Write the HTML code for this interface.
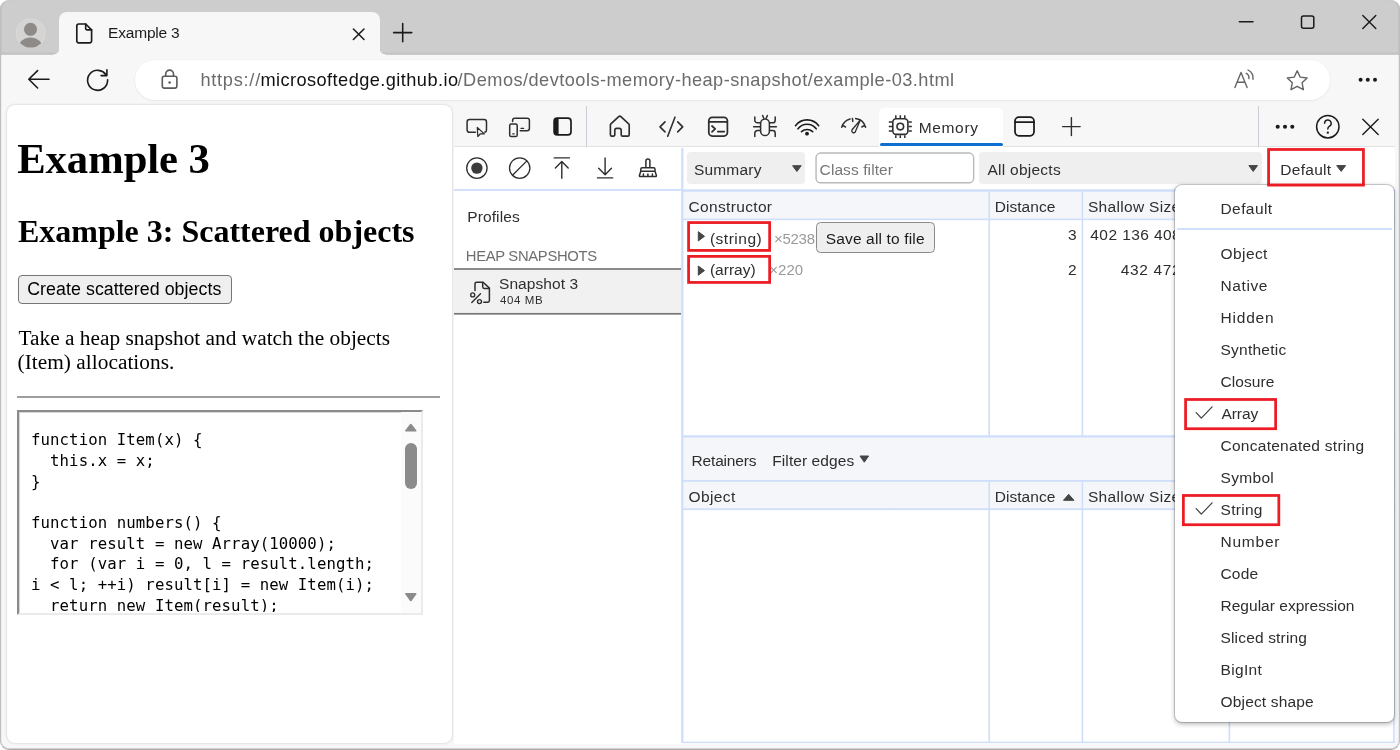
<!DOCTYPE html>
<html lang="en">
<head>
<meta charset="utf-8">
<title>Example 3</title>
<style>
*{box-sizing:border-box;margin:0;padding:0}
html,body{width:1400px;height:750px;overflow:hidden;background:#fff}
body{font-family:"Liberation Sans",sans-serif;color:#1b1b1b;position:relative}
.g{position:absolute;left:0;top:0;width:0;height:0;will-change:transform}
.b{position:absolute}
.t{position:absolute;white-space:pre;line-height:normal}
svg.ov{position:absolute;left:0;top:0;width:1400px;height:750px;overflow:visible;pointer-events:none}
.k{fill:none;stroke:#1b1b1b;stroke-width:1.5;stroke-linecap:round;stroke-linejoin:round}
.d{fill:none;stroke:#2e2e2e;stroke-width:1.4;stroke-linecap:round;stroke-linejoin:round}
.gy{fill:none;stroke:#646464;stroke-width:1.4;stroke-linecap:round;stroke-linejoin:round}
#win{position:absolute;left:0;top:0;width:1400px;height:750px;border-radius:9px;background:#f7f7f7;overflow:hidden}
#frame{position:absolute;left:0;top:0;width:1400px;height:750px;border-radius:9px;border:1px solid;border-color:#cbcbcb #bfbfbf #ababab #bfbfbf;box-shadow:inset 0 -1px 0 rgba(0,0,0,.15),inset -1px 0 0 rgba(0,0,0,.05),inset 1px 0 0 rgba(0,0,0,.04);pointer-events:none}
#titlebar{left:0;top:0;width:1400px;height:55px;background:linear-gradient(#cdcdcd 0,#cdcdcd 52px,#c3c3c3 53.2px,#c4c4c4 54.3px,#dcdcdc 55px)}
#tab{left:59px;top:12px;width:320.5px;height:43px;background:#f7f7f7;border-radius:8px 8px 0 0}
.tc{width:6.5px;height:6.5px;top:48px}
#addr{left:135px;top:60px;width:1195px;height:40px;border-radius:20px;background:#fff;box-shadow:0 0.5px 2px rgba(0,0,0,.10)}
#page{left:6.6px;top:105.4px;width:445.4px;height:637.6px;background:#fff;border-radius:8px;box-shadow:0 0 2.5px rgba(0,0,0,.22)}
#dt{left:454px;top:147px;width:940.5px;height:596.7px;background:#fff}
.ln{background:#d2e1fb}
.hdr{background:#f5f6f9}
.red{border:3px solid #e81224}
.sel{background:#efefef;border-radius:4px}
</style>
</head>
<body>
<div id="win">

<!-- ===== browser chrome ===== -->
<div class="g" id="chrome">
<div class="b" id="titlebar"></div>
<div class="b" id="tab"></div>
<div class="b tc" style="left:52.5px;background:radial-gradient(circle at 0 0,rgba(247,247,247,0) 6.1px,#f7f7f7 6.9px)"></div>
<div class="b tc" style="left:379.5px;background:radial-gradient(circle at 100% 0,rgba(247,247,247,0) 6.1px,#f7f7f7 6.9px)"></div>
<div class="b" id="addr"></div>
<span class="t" style="left:108.1px;top:24.4px;font-size:15.5px;color:#1b1b1b;letter-spacing:-0.200px;">Example 3</span>
<span class="t" style="left:200.4px;top:69.9px;font-size:18.2px;color:#6b6b6b;letter-spacing:0.743px;">https://</span>
<span class="t" style="left:260.4px;top:69.9px;font-size:18.2px;color:#111;letter-spacing:0.436px;">microsoftedge.github.io</span>
<span class="t" style="left:457.6px;top:69.9px;font-size:18.2px;color:#6b6b6b;letter-spacing:0.459px;">/Demos/devtools-memory-heap-snapshot/example-03.html</span>
<svg class="ov" viewBox="0 0 1400 750">
<!-- profile avatar -->
<clipPath id="av"><circle cx="30.7" cy="33.3" r="14.3"/></clipPath>
<circle cx="30.7" cy="33.3" r="14.9" fill="#dcdad8"/>
<circle cx="30.7" cy="33.3" r="14.1" fill="#d5d4d2"/>
<g clip-path="url(#av)" fill="#8e8a87"><circle cx="30.5" cy="29.3" r="6.5"/><ellipse cx="30.5" cy="48" rx="12" ry="10.5"/></g>
<!-- tab page icon -->
<path class="k" style="stroke-width:1.65" d="M78.8 24h6.9l5.9 5.9v10.9a2 2 0 0 1-2 2h-10.8a2 2 0 0 1-2-2v-14.8a2 2 0 0 1 2-2z"/>
<path class="k" style="stroke-width:1.65" d="M85.7 24v4.4a1.5 1.5 0 0 0 1.5 1.5h4.4"/>
<!-- tab close, new tab -->
<path class="k" style="stroke-width:1.55" d="M353.4 29l10.6 10.5M364 29l-10.6 10.5"/>
<path class="k" style="stroke-width:1.55" d="M393.6 32.6h18.2M402.7 23.5v18.2"/>
<!-- window controls -->
<path class="k" style="stroke-width:1.5" d="M1239.4 21.8h13.6"/>
<rect class="k" style="stroke-width:1.5" x="1301.5" y="15.9" width="12.3" height="12.3" rx="2"/>
<path class="k" style="stroke-width:1.45" d="M1362.8 15.5l13 13M1375.8 15.5l-13 13"/>
<!-- back, refresh -->
<path class="k" style="stroke-width:1.6" d="M49 79.3H29M37.6 70.6l-8.8 8.7 8.8 8.7"/>
<path class="k" style="stroke-width:1.6" d="M106.2 75.2A10 10 0 1 0 107.6 79.8M106.9 69.8v5.8h-5.8"/>
<!-- lock -->
<rect class="gy" style="stroke:#5a5a5a;stroke-width:1.6" x="162.3" y="76.3" width="14.6" height="11.8" rx="2"/>
<path class="gy" style="stroke:#5a5a5a;stroke-width:1.6" d="M165.7 76.3v-2.3a3.9 3.9 0 0 1 7.8 0v2.3"/>
<circle cx="169.6" cy="82.5" r="1.25" fill="#5a5a5a"/>
<!-- read aloud -->
<path class="gy" d="M1234.9 87.6l6.1-15.2 6.1 15.2M1237.2 82.3h7.6"/>
<path class="gy" d="M1246.3 73.4a5.2 5.2 0 0 1 2.6 5.2M1248 70a9.3 9.3 0 0 1 5 9.2"/>
<!-- star -->
<path class="gy" d="M1297.2 70.8l3 6.3 6.9 0.9-5 4.8 1.3 6.9-6.2-3.4-6.2 3.4 1.3-6.9-5-4.8 6.9-0.9z"/>
<!-- menu dots -->
<g fill="#1b1b1b"><circle cx="1360.6" cy="79.7" r="2"/><circle cx="1367.8" cy="79.7" r="2"/><circle cx="1375" cy="79.7" r="2"/></g>
</svg>
</div>

<!-- ===== web page ===== -->
<div class="g" id="pagewrap">
<div class="b" id="page"></div>
<div class="b" style="left:17.5px;top:275.4px;width:214.4px;height:28.8px;background:#efefef;border:1.3px solid #767676;border-radius:4px"></div>
<div class="b" style="left:17px;top:396px;width:422.5px;height:2px;background:#9d9d9d"></div>
<!-- textarea -->
<div class="b" style="left:17px;top:410px;width:406px;height:204.5px;background:#fff;border:2px solid;border-color:#8b8b8b #ebebeb #ebebeb #8b8b8b;box-shadow:inset 1px 1px 0 rgba(139,139,139,.35)"></div>
<div class="b" style="left:401px;top:412px;width:20px;height:200.5px;background:#fbfbfb"></div>
<div class="b" style="left:404.6px;top:443.2px;width:12.4px;height:45.4px;border-radius:6.2px;background:#8b8b8b"></div>
<div class="b" style="left:20px;top:412.4px;width:380px;height:199.8px;overflow:hidden"><div class="g" style="left:-20px;top:-412.4px">
<span class="t" style="left:31.0px;top:430.4px;font-size:15.7px;color:#000;font-family:'DejaVu Sans Mono','Liberation Mono',monospace;letter-spacing:0.085px;">function Item(x) {</span>
<span class="t" style="left:31.0px;top:451.1px;font-size:15.7px;color:#000;font-family:'DejaVu Sans Mono','Liberation Mono',monospace;letter-spacing:0.085px;">  this.x = x;</span>
<span class="t" style="left:31.0px;top:471.7px;font-size:15.7px;color:#000;font-family:'DejaVu Sans Mono','Liberation Mono',monospace;letter-spacing:0.077px;">}</span>
<span class="t" style="left:31.0px;top:513.1px;font-size:15.7px;color:#000;font-family:'DejaVu Sans Mono','Liberation Mono',monospace;letter-spacing:0.085px;">function numbers() {</span>
<span class="t" style="left:31.0px;top:533.8px;font-size:15.7px;color:#000;font-family:'DejaVu Sans Mono','Liberation Mono',monospace;letter-spacing:0.085px;">  var result = new Array(10000);</span>
<span class="t" style="left:31.0px;top:554.4px;font-size:15.7px;color:#000;font-family:'DejaVu Sans Mono','Liberation Mono',monospace;letter-spacing:0.085px;">  for (var i = 0, l = result.length;</span>
<span class="t" style="left:31.0px;top:575.1px;font-size:15.7px;color:#000;font-family:'DejaVu Sans Mono','Liberation Mono',monospace;letter-spacing:0.085px;">i &lt; l; ++i) result[i] = new Item(i);</span>
<span class="t" style="left:31.0px;top:595.8px;font-size:15.7px;color:#000;font-family:'DejaVu Sans Mono','Liberation Mono',monospace;letter-spacing:0.085px;">  return new Item(result);</span>
</div></div>
<h1 class="t" style="left:17.2px;top:133.6px;font-size:42.67px;color:#000;font-family:'Liberation Serif',serif;font-weight:bold;letter-spacing:-0.050px;">Example 3</h1>
<h2 class="t" style="left:17.9px;top:213.0px;font-size:32px;color:#000;font-family:'Liberation Serif',serif;font-weight:bold;">Example 3: Scattered objects</h2>
<span class="t" style="left:27.2px;top:279.2px;font-size:17.78px;color:#000;letter-spacing:0.070px;">Create scattered objects</span>
<p class="t" style="left:18.5px;top:325.9px;font-size:21.33px;color:#000;font-family:'Liberation Serif',serif;letter-spacing:0.012px;">Take a heap snapshot and watch the objects</p>
<p class="t" style="left:17.5px;top:350.2px;font-size:21.33px;color:#000;font-family:'Liberation Serif',serif;letter-spacing:0.028px;">(Item) allocations.</p>
<svg class="ov" viewBox="0 0 1400 750">
<path fill="#8b8b8b" stroke="#8b8b8b" stroke-width="1.8" stroke-linejoin="round" d="M406 430.7h9.6l-4.8-6.1z"/>
<path fill="#8b8b8b" stroke="#8b8b8b" stroke-width="1.8" stroke-linejoin="round" d="M406 593.8h9.6l-4.8 6.6z"/>
</svg>
</div>

<!-- ===== devtools ===== -->
<div class="g" id="devtools">
<div class="b" id="dt"></div>
<!-- main toolbar -->
<div class="b" style="left:454px;top:103px;width:940.5px;height:44px;background:#f7f7f7;border-bottom:1px solid #e2e2e2"></div>
<div class="b" style="left:586px;top:105.5px;width:1.4px;height:41px;background:#c9ced6"></div>
<div class="b" style="left:1257.6px;top:105.5px;width:1.4px;height:41px;background:#c9ced6"></div>
<div class="b" style="left:879.2px;top:108px;width:123.8px;height:38.5px;background:#fff;border-radius:5px 5px 0 0"></div>
<div class="b" style="left:879.6px;top:142.8px;width:123.2px;height:3.6px;background:#0f6fd0;border-radius:2px"></div>
<!-- sidebar -->
<div class="b" style="left:454px;top:269px;width:227px;height:45px;background:#f1f1f1"></div>
<!-- filter row -->
<div class="b sel" style="left:686.9px;top:152.3px;width:118.4px;height:31.4px"></div>
<div class="b" style="left:816px;top:153px;width:158px;height:30px;background:#fff;border-radius:5px"></div>
<svg class="ov" viewBox="0 0 1400 750"><rect x="816.05" y="153.05" width="157.6" height="29.7" rx="4.6" fill="none" stroke="#b9b9b9" stroke-width="1.4"/></svg>
<div class="b sel" style="left:979.4px;top:152.3px;width:282.3px;height:31.4px"></div>
<!-- grids -->
<div class="b hdr" style="left:683px;top:191px;width:711px;height:29px"></div>
<div class="b hdr" style="left:683px;top:437px;width:711px;height:73px"></div>
<div class="b" style="left:454px;top:188px;width:228px;height:3px;background:linear-gradient(to bottom,rgba(207,223,251,0.05) 0px,rgba(207,223,251,0.05) 1px,rgba(207,223,251,1.00) 1px,rgba(207,223,251,1.00) 2px,rgba(207,223,251,0.85) 2px,rgba(207,223,251,0.85) 3px)"></div>
<div class="b" style="left:454px;top:268px;width:227px;height:2px;background:linear-gradient(to bottom,rgba(119,119,119,0.85) 0px,rgba(119,119,119,0.85) 1px,rgba(119,119,119,0.85) 1px,rgba(119,119,119,0.85) 2px)"></div>
<div class="b" style="left:454px;top:312px;width:227px;height:3px;background:linear-gradient(to bottom,rgba(119,119,119,0.05) 0px,rgba(119,119,119,0.05) 1px,rgba(119,119,119,1.00) 1px,rgba(119,119,119,1.00) 2px,rgba(119,119,119,0.65) 2px,rgba(119,119,119,0.65) 3px)"></div>
<div class="b" style="left:681px;top:148px;width:3px;height:595px;background:linear-gradient(to right,rgba(207,223,251,0.85) 0px,rgba(207,223,251,0.85) 1px,rgba(207,223,251,1.00) 1px,rgba(207,223,251,1.00) 2px,rgba(207,223,251,0.45) 2px,rgba(207,223,251,0.45) 3px)"></div>
<div class="b" style="left:683px;top:189px;width:712px;height:3px;background:linear-gradient(to bottom,rgba(207,223,251,0.75) 0px,rgba(207,223,251,0.75) 1px,rgba(207,223,251,1.00) 1px,rgba(207,223,251,1.00) 2px,rgba(207,223,251,0.75) 2px,rgba(207,223,251,0.75) 3px)"></div>
<div class="b" style="left:683px;top:218px;width:712px;height:3px;background:linear-gradient(to bottom,rgba(207,223,251,0.40) 0px,rgba(207,223,251,0.40) 1px,rgba(207,223,251,1.00) 1px,rgba(207,223,251,1.00) 2px,rgba(207,223,251,0.20) 2px,rgba(207,223,251,0.20) 3px)"></div>
<div class="b" style="left:683px;top:435px;width:712px;height:3px;background:linear-gradient(to bottom,rgba(207,223,251,0.75) 0px,rgba(207,223,251,0.75) 1px,rgba(207,223,251,1.00) 1px,rgba(207,223,251,1.00) 2px,rgba(207,223,251,0.55) 2px,rgba(207,223,251,0.55) 3px)"></div>
<div class="b" style="left:683px;top:479px;width:712px;height:3px;background:linear-gradient(to bottom,rgba(207,223,251,0.05) 0px,rgba(207,223,251,0.05) 1px,rgba(207,223,251,1.00) 1px,rgba(207,223,251,1.00) 2px,rgba(207,223,251,0.85) 2px,rgba(207,223,251,0.85) 3px)"></div>
<div class="b" style="left:683px;top:508px;width:712px;height:3px;background:linear-gradient(to bottom,rgba(207,223,251,0.70) 0px,rgba(207,223,251,0.70) 1px,rgba(207,223,251,1.00) 1px,rgba(207,223,251,1.00) 2px,rgba(207,223,251,0.10) 2px,rgba(207,223,251,0.10) 3px)"></div>
<div class="b" style="left:683px;top:741px;width:712px;height:3px;background:linear-gradient(to bottom,rgba(207,223,251,0.35) 0px,rgba(207,223,251,0.35) 1px,rgba(207,223,251,1.00) 1px,rgba(207,223,251,1.00) 2px,rgba(207,223,251,0.15) 2px,rgba(207,223,251,0.15) 3px)"></div>
<div class="b" style="left:1393px;top:191px;width:2px;height:552px;background:linear-gradient(to right,rgba(207,223,251,0.90) 0px,rgba(207,223,251,0.90) 1px,rgba(207,223,251,0.70) 1px,rgba(207,223,251,0.70) 2px)"></div>
<div class="b" style="left:988px;top:192px;width:2px;height:244px;background:linear-gradient(to right,rgba(207,223,251,0.60) 0px,rgba(207,223,251,0.60) 1px,rgba(207,223,251,1.00) 1px,rgba(207,223,251,1.00) 2px)"></div>
<div class="b" style="left:988px;top:482px;width:2px;height:260px;background:linear-gradient(to right,rgba(207,223,251,0.60) 0px,rgba(207,223,251,0.60) 1px,rgba(207,223,251,1.00) 1px,rgba(207,223,251,1.00) 2px)"></div>
<div class="b" style="left:1081px;top:192px;width:3px;height:244px;background:linear-gradient(to right,rgba(207,223,251,0.40) 0px,rgba(207,223,251,0.40) 1px,rgba(207,223,251,1.00) 1px,rgba(207,223,251,1.00) 2px,rgba(207,223,251,0.20) 2px,rgba(207,223,251,0.20) 3px)"></div>
<div class="b" style="left:1081px;top:482px;width:3px;height:260px;background:linear-gradient(to right,rgba(207,223,251,0.40) 0px,rgba(207,223,251,0.40) 1px,rgba(207,223,251,1.00) 1px,rgba(207,223,251,1.00) 2px,rgba(207,223,251,0.20) 2px,rgba(207,223,251,0.20) 3px)"></div>
<div class="b" style="left:1228px;top:192px;width:3px;height:244px;background:linear-gradient(to right,rgba(207,223,251,0.40) 0px,rgba(207,223,251,0.40) 1px,rgba(207,223,251,1.00) 1px,rgba(207,223,251,1.00) 2px,rgba(207,223,251,0.20) 2px,rgba(207,223,251,0.20) 3px)"></div>
<div class="b" style="left:1228px;top:482px;width:3px;height:260px;background:linear-gradient(to right,rgba(207,223,251,0.40) 0px,rgba(207,223,251,0.40) 1px,rgba(207,223,251,1.00) 1px,rgba(207,223,251,1.00) 2px,rgba(207,223,251,0.20) 2px,rgba(207,223,251,0.20) 3px)"></div>
<!-- save button -->
<div class="b" style="left:816px;top:222px;width:118.9px;height:30.9px;background:#efefef;border:1.3px solid #8a8a8a;border-radius:4.5px"></div>
<span class="t" style="left:918.7px;top:119.2px;font-size:15.5px;color:#2e2e2e;letter-spacing:0.660px;">Memory</span>
<span class="t" style="left:467.2px;top:208.4px;font-size:15.5px;color:#2e2e2e;letter-spacing:0.114px;">Profiles</span>
<span class="t" style="left:465.8px;top:247.8px;font-size:14.8px;color:#6e6e6e;letter-spacing:-0.315px;">HEAP SNAPSHOTS</span>
<span class="t" style="left:499.0px;top:275.1px;font-size:15.5px;color:#2e2e2e;letter-spacing:0.078px;">Snapshot 3</span>
<span class="t" style="left:500.0px;top:293.8px;font-size:11.5px;color:#2e2e2e;letter-spacing:0.600px;">404 MB</span>
<span class="t" style="left:693.9px;top:161.2px;font-size:15.5px;color:#2e2e2e;letter-spacing:0.200px;">Summary</span>
<span class="t" style="left:819.6px;top:161.2px;font-size:15.5px;color:#767676;letter-spacing:0.091px;">Class filter</span>
<span class="t" style="left:987.5px;top:161.2px;font-size:15.5px;color:#2e2e2e;letter-spacing:0.250px;">All objects</span>
<span class="t" style="left:1280.3px;top:160.7px;font-size:15.5px;color:#2e2e2e;letter-spacing:0.283px;">Default</span>
<span class="t" style="left:688.6px;top:197.8px;font-size:15.5px;color:#2e2e2e;letter-spacing:0.330px;">Constructor</span>
<span class="t" style="left:994.7px;top:197.8px;font-size:15.5px;color:#2e2e2e;letter-spacing:0.057px;">Distance</span>
<span class="t" style="left:1087.9px;top:197.8px;font-size:15.5px;color:#2e2e2e;letter-spacing:0.327px;">Shallow Size</span>
<span class="t" style="left:709.9px;top:229.7px;font-size:15.5px;color:#2e2e2e;letter-spacing:0.514px;">(string)</span>
<span class="t" style="left:773.9px;top:230.2px;font-size:15px;color:#9a9a9a;letter-spacing:-0.250px;">×5238</span>
<span class="t" style="left:825.7px;top:230.2px;font-size:15.5px;color:#1b1b1b;letter-spacing:0.160px;">Save all to file</span>
<span class="t" style="left:1067.9px;top:226.0px;font-size:15.5px;color:#2e2e2e;">3</span>
<span class="t" style="left:1090.3px;top:226.0px;font-size:15.5px;color:#2e2e2e;letter-spacing:0.420px;">402 136 408</span>
<span class="t" style="left:709.9px;top:261.0px;font-size:15.5px;color:#2e2e2e;letter-spacing:0.017px;">(array)</span>
<span class="t" style="left:769.3px;top:261.0px;font-size:15px;color:#9a9a9a;">×220</span>
<span class="t" style="left:1067.9px;top:260.9px;font-size:15.5px;color:#2e2e2e;">2</span>
<span class="t" style="left:1120.8px;top:260.9px;font-size:15.5px;color:#2e2e2e;letter-spacing:0.617px;">432 472</span>
<span class="t" style="left:691.6px;top:451.7px;font-size:15.5px;color:#2e2e2e;letter-spacing:-0.188px;">Retainers</span>
<span class="t" style="left:772.3px;top:451.7px;font-size:15.5px;color:#2e2e2e;letter-spacing:0.082px;">Filter edges</span>
<span class="t" style="left:688.6px;top:487.8px;font-size:15.5px;color:#2e2e2e;letter-spacing:0.380px;">Object</span>
<span class="t" style="left:994.7px;top:487.8px;font-size:15.5px;color:#2e2e2e;letter-spacing:0.057px;">Distance</span>
<span class="t" style="left:1087.9px;top:487.8px;font-size:15.5px;color:#2e2e2e;letter-spacing:0.327px;">Shallow Size</span>
<svg class="ov" viewBox="0 0 1400 750">
<!-- red callouts -->
<rect x="688.58" y="222.57" width="81.05" height="27.85" fill="none" stroke="#ec1c24" stroke-width="2.75"/>
<rect x="688.58" y="256.38" width="81.05" height="26.05" fill="none" stroke="#ec1c24" stroke-width="2.75"/>
<rect x="1268.58" y="149.47" width="94.85" height="35.65" fill="none" stroke="#ec1c24" stroke-width="2.75"/>
<!-- inspect -->
<path class="d" style="stroke-width:1.5" d="M475.4 132.3h-6a2.3 2.3 0 0 1-2.3-2.3v-8.1a2.3 2.3 0 0 1 2.3-2.3h14.8a2.3 2.3 0 0 1 2.3 2.3v8a2.4 2.4 0 0 1-1.6 2.3"/>
<path class="d" style="stroke-width:1.25" d="M477.3 127.5l0.5 9 2.6-2.7 3.9 0.1z"/>
<!-- device -->
<path class="d" style="stroke-width:1.5" d="M512.6 121.4v-1a2.2 2.2 0 0 1 2.2-2.2h12.4a2.2 2.2 0 0 1 2.2 2.2v8.1a2.2 2.2 0 0 1-2.2 2.2h-7"/>
<rect class="d" style="stroke-width:1.5" x="509.7" y="124" width="7.5" height="12.6" rx="1.6"/>
<path class="d" style="stroke-width:1.2" d="M512.8 133.9h1.4M521 128.4h2.6"/>
<!-- dock -->
<rect class="k" style="stroke-width:1.7" x="554.1" y="118.2" width="16.9" height="16.7" rx="3.2"/>
<path fill="#1b1b1b" d="M557.3 118.2h1.3v16.7h-1.3a3.2 3.2 0 0 1-3.2-3.2v-10.3a3.2 3.2 0 0 1 3.2-3.2z"/>
<!-- home -->
<path class="d" style="stroke-width:1.65" d="M611.8 136.1a1.4 1.4 0 0 1-1.4-1.4v-9.6a1.6 1.6 0 0 1 0.5-1.2l7.8-7.2a1.6 1.6 0 0 1 2.2 0l7.8 7.2a1.6 1.6 0 0 1 0.5 1.2v9.6a1.4 1.4 0 0 1-1.4 1.4h-5.2a1.400000000000034 1.400000000000034 0 0 1-1.4-1.4v-4.6a1.8 1.8 0 0 0-1.8-1.8h-2.8a1.8 1.8 0 0 0-1.8 1.8v4.6a1.400000000000034 1.400000000000034 0 0 1-1.4 1.4z"/>
<!-- elements -->
<path class="d" style="stroke-width:1.6" d="M665 121.9l-5 5 5 5M677.7 121.9l5 5-5 5M675 117.2l-7.300000000000001 19"/>
<!-- console -->
<rect class="d" style="stroke-width:1.75" x="708.8" y="117.4" width="18.6" height="18.6" rx="3.4"/>
<path class="d" style="stroke-width:1.75" d="M709 121.9h18.2M712 126l3.2 2.9-3.2 2.9M717.8 131.6h6.4"/>
<!-- bug -->
<path class="d" style="stroke-width:1.5" d="M760.6 123.4a4.4 4.4 0 0 1 8.8 0v7.8a4.4 4.4 0 0 1-8.8 0z"/>
<path class="d" style="stroke-width:1.5" d="M762.6 115.5l1.2 2.8M767.4 115.5l-1.2 2.8M754.8 117v3.200000000000003a2.6 2.6 0 0 0 2.6 2.6h3M775.2 117v3.2a2.6 2.6 0 0 1-2.6 2.6h-3M753.6 126.7h6.8M769.6 126.7h6.800000000000001M754.8 136.4v-3.2a2.6 2.6 0 0 1 2.6-2.6h3M775.2 136.4v-3.2a2.6 2.6 0 0 0-2.6-2.6h-3"/>
<!-- network -->
<path class="d" style="stroke-width:1.6;stroke:#1b1b1b" d="M795.5 125.7a14.4 14.4 0 0 1 23.2 0M798 128.8a11.3 11.3 0 0 1 18.2 0M801.5 131.6a8.5 8.5 0 0 1 11.2 0"/>
<circle cx="807" cy="133.7" r="1.9" fill="#1b1b1b"/>
<!-- performance -->
<path class="d" style="stroke-width:1.5" d="M841.7 127.2a12.2 12.2 0 0 1 8.4-8.2M855.6 118.6a12.2 12.2 0 0 1 10 8.6M841.7 127.2l1-1.8 2.8 1.6M865.6 127.2l-1-1.8-2.8 1.6M852.4 118.4l0.4 3"/>
<path class="d" style="stroke-width:1.3" d="M860.4 119.8l-8.5 10.2a2 2 0 0 0 3.2 2.2z"/>
<!-- memory chip -->
<rect class="d" style="stroke-width:1.6" x="892.8" y="118.7" width="15.1" height="15.7" rx="3.4"/>
<circle class="d" style="stroke-width:1.6" cx="900.3" cy="126.6" r="3.3"/>
<path class="d" style="stroke-width:1.5;stroke-linecap:butt" d="M895.8 115.2v2.8M900.3 115.2v2.8M904.8 115.2v2.8M895.8 135.2v2.8M900.3 135.2v2.8M904.8 135.2v2.8M888.8 122.1h3.2M888.8 126.6h3.2M888.8 131.1h3.2M908.6 122.1h3.2M908.6 126.6h3.2M908.6 131.1h3.2"/>
<!-- application -->
<rect class="k" style="stroke-width:1.75" x="1015" y="117.2" width="19" height="18.6" rx="4"/>
<path class="k" style="stroke-width:1.75" d="M1015.2 122.2h18.6"/>
<!-- plus -->
<path class="d" d="M1062.6 126.6h17.6M1071.4 117.6v18"/>
<!-- more, help, close -->
<g fill="#1b1b1b"><circle cx="1277.7" cy="126.8" r="2.05"/><circle cx="1285" cy="126.8" r="2.05"/><circle cx="1292.3" cy="126.8" r="2.05"/></g>
<circle class="k" style="stroke-width:1.5" cx="1327.8" cy="126.7" r="11.2"/>
<path class="k" style="stroke-width:1.4" d="M1324.6 123.3a3.3 3.3 0 1 1 4.9 2.9c-1.2 0.8-1.7 1.5-1.7 2.9"/>
<circle cx="1327.8" cy="132.7" r="1.15" fill="#1b1b1b"/>
<path class="k" style="stroke-width:1.4" d="M1362.8 119.2l15.4 15.4M1378.2 119.2l-15.4 15.4"/>
<!-- record / clear / load / save / gc -->
<circle class="d" style="stroke-width:1.3" cx="476.9" cy="168.1" r="10.2"/>
<circle cx="476.9" cy="168.1" r="5.7" fill="#3c3c3c"/>
<circle class="d" style="stroke-width:1.3" cx="519.7" cy="168.1" r="10.2"/>
<path class="d" style="stroke-width:1.3" d="M512.5 175.3l14.4-14.4"/>
<path class="d" d="M554.2 157.9h15.2M561.8 178.2v-16.6M555.4 168l6.4-6.5 6.4 6.5"/>
<path class="d" d="M597.5 177.9h15.2M605.1 158v16.6M598.7 168.2l6.4 6.5 6.4-6.5"/>
<path class="d" style="stroke-width:1.5" d="M645.9 167.8v-6.8a2 2 0 0 1 4 0v6.800000000000001M642.2 167.8h11.4a1.4 1.4 0 0 1 1.4 1.4v2h-14.2v-2a1.4 1.4 0 0 1 1.4-1.4zM640.8 171.2l-1.4 4.3a0.8 0.8 0 0 0 0.8 1h15.4a0.8 0.8 0 0 0 0.8-1l-1.4-4.3M643.4 176.2v-2.2M647.9 176.2v-2.2M652.4 176.2v-2.2"/>
<!-- snapshot icon -->
<path class="d" style="stroke-width:1.5" d="M475 290.6v-6.9a1.5 1.5 0 0 1 1.5-1.5h6.6l6.3 5.9v12.4a1.8 1.8 0 0 1-1.8 1.8h-3.8"/>
<path class="d" style="stroke-width:1.5" d="M482.7 282.4v4.4a1.6 1.6 0 0 0 1.6 1.6h4.9"/>
<circle class="d" style="stroke-width:1.4" cx="472.7" cy="294.9" r="2"/><circle class="d" style="stroke-width:1.4" cx="479.5" cy="301.6" r="2"/>
<path class="d" style="stroke-width:1.4" d="M480.5 293.8l-8.7 8.8"/>
<!-- triangles -->
<g fill="#454545" stroke="#454545" stroke-width="1" stroke-linejoin="round">
<path d="M792.6 165.7h8.6l-4.3 5.8z"/>
<path d="M1248.9 165.6h8.6l-4.3 5.8z"/>
<path d="M1336.7 165.6h8.9l-4.45 5.8z"/>
<path d="M860 456h8.6l-4.3 6.2z"/>
<path d="M1063.5 500.3h10.4l-5.2-6z"/>
<path d="M698.3 231.7v9.2l6.2-4.6z"/>
<path d="M698.3 266v9.2l6.2-4.6z"/>
</g>
</svg>
</div>

<!-- ===== dropdown menu ===== -->
<div class="g" id="menu">
<div class="b" style="left:1175.4px;top:185.2px;width:218.3px;height:536.8px;background:#fff;border-radius:7px;box-shadow:0 0 0 1px rgba(0,0,0,.17),0 1.5px 5px rgba(0,0,0,.30)"></div>
<div class="b ln" style="left:1177.2px;top:228.2px;width:215px;height:1.7px"></div>
<span class="t" style="left:1220.5px;top:199.5px;font-size:15.5px;color:#2e2e2e;letter-spacing:0.417px;">Default</span>
<span class="t" style="left:1220.5px;top:244.6px;font-size:15.5px;color:#2e2e2e;letter-spacing:0.420px;">Object</span>
<span class="t" style="left:1220.5px;top:276.6px;font-size:15.5px;color:#2e2e2e;letter-spacing:0.600px;">Native</span>
<span class="t" style="left:1220.5px;top:308.6px;font-size:15.5px;color:#2e2e2e;letter-spacing:0.800px;">Hidden</span>
<span class="t" style="left:1220.5px;top:340.6px;font-size:15.5px;color:#2e2e2e;letter-spacing:0.238px;">Synthetic</span>
<span class="t" style="left:1220.5px;top:372.7px;font-size:15.5px;color:#2e2e2e;letter-spacing:0.083px;">Closure</span>
<span class="t" style="left:1221.5px;top:404.6px;font-size:15.5px;color:#2e2e2e;letter-spacing:-0.075px;">Array</span>
<span class="t" style="left:1220.5px;top:436.7px;font-size:15.5px;color:#2e2e2e;letter-spacing:0.267px;">Concatenated string</span>
<span class="t" style="left:1220.5px;top:468.7px;font-size:15.5px;color:#2e2e2e;letter-spacing:0.320px;">Symbol</span>
<span class="t" style="left:1220.5px;top:500.6px;font-size:15.5px;color:#2e2e2e;letter-spacing:0.300px;">String</span>
<span class="t" style="left:1220.5px;top:532.8px;font-size:15.5px;color:#2e2e2e;letter-spacing:0.760px;">Number</span>
<span class="t" style="left:1220.5px;top:564.8px;font-size:15.5px;color:#2e2e2e;letter-spacing:0.167px;">Code</span>
<span class="t" style="left:1220.5px;top:596.8px;font-size:15.5px;color:#2e2e2e;letter-spacing:0.024px;">Regular expression</span>
<span class="t" style="left:1220.5px;top:628.8px;font-size:15.5px;color:#2e2e2e;letter-spacing:0.167px;">Sliced string</span>
<span class="t" style="left:1220.5px;top:660.7px;font-size:15.5px;color:#2e2e2e;letter-spacing:0.340px;">BigInt</span>
<span class="t" style="left:1220.5px;top:692.7px;font-size:15.5px;color:#2e2e2e;letter-spacing:0.173px;">Object shape</span>
<svg class="ov" viewBox="0 0 1400 750">
<rect x="1185.58" y="399.48" width="90.05" height="29.25" fill="none" stroke="#ec1c24" stroke-width="2.75"/>
<rect x="1183.38" y="495.48" width="95.45" height="29.25" fill="none" stroke="#ec1c24" stroke-width="2.75"/>
<path d="M1267.2 185.12H1364.8" stroke="#ec1c24" stroke-width="2.75"/>
<path class="d" style="stroke-width:1.3;stroke:#454545" d="M1196.2 412.6l5.100000000000001 5.5 10.8-11.2M1196.2 508.6l5.100000000000001 5.5 10.8-11.2"/>
</svg>
</div>

</div>
<div id="frame"></div>
</body>
</html>
